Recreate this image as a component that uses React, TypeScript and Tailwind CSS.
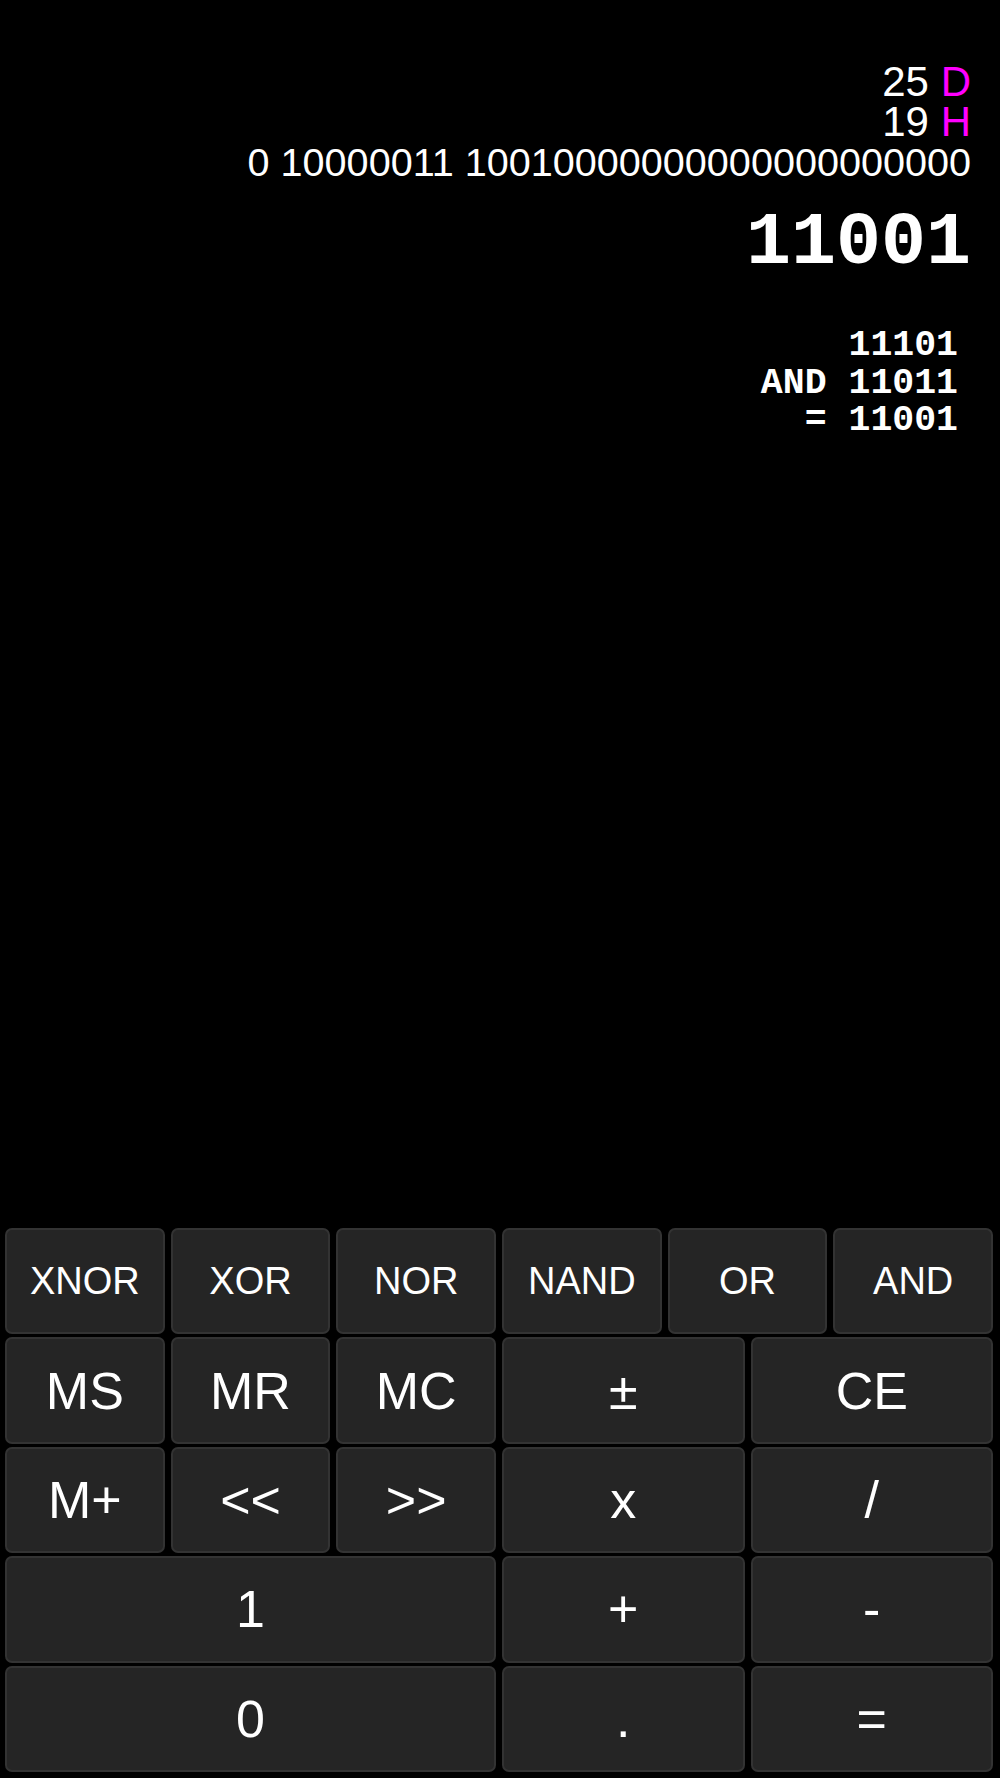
const keys = [
  { label: "XNOR", span: "col-span-2", size: "text-[38px]" },
  { label: "XOR", span: "col-span-2", size: "text-[38px]" },
  { label: "NOR", span: "col-span-2", size: "text-[38px]" },
  { label: "NAND", span: "col-span-2", size: "text-[38px]" },
  { label: "OR", span: "col-span-2", size: "text-[38px]" },
  { label: "AND", span: "col-span-2", size: "text-[38px]" },
  { label: "MS", span: "col-span-2" },
  { label: "MR", span: "col-span-2" },
  { label: "MC", span: "col-span-2" },
  { label: "±", span: "col-span-3" },
  { label: "CE", span: "col-span-3" },
  { label: "M+", span: "col-span-2" },
  { label: "<<", span: "col-span-2" },
  { label: ">>", span: "col-span-2" },
  { label: "x", span: "col-span-3" },
  { label: "/", span: "col-span-3" },
  { label: "1", span: "col-span-6" },
  { label: "+", span: "col-span-3" },
  { label: "-", span: "col-span-3" },
  { label: "0", span: "col-span-6" },
  { label: ".", span: "col-span-3" },
  { label: "=", span: "col-span-3" },
];

const Key = ({ label, span, size = "text-[52px]" }) => {
  return (
    <button
      type="button"
      className={`${span} ${size} flex items-center justify-center rounded-[7px] border-2 border-[#333333] bg-[#252525] text-white leading-none`}
    >
      {label}
    </button>
  );
};

export default function App() {
  return (
    <div
      className="h-[1778px] bg-black flex flex-col"
      style={{ fontFamily: '"Liberation Sans", Arial, sans-serif' }}
    >
      <div className="flex-1 flex flex-col items-end pt-[62px] pr-[29px] text-white">
        <div className="text-[42px] leading-[40px] whitespace-pre">
          {"25 "}
          <span className="text-[#ff00ff]">D</span>
        </div>
        <div className="text-[42px] leading-[40px] whitespace-pre">
          {"19 "}
          <span className="text-[#ff00ff]">H</span>
        </div>
        <div className="text-[39.6px] leading-[40px] whitespace-nowrap">
          0 10000011 10010000000000000000000
        </div>
        <div
          className="mt-[24px] text-[75px] leading-[75px] font-bold"
          style={{ fontFamily: '"Liberation Mono", "Courier New", monospace' }}
        >
          11001
        </div>
        <div
          className="mt-[46px] mr-[13px] text-[36.5px] leading-[37.5px] font-bold text-right whitespace-pre"
          style={{ fontFamily: '"Liberation Mono", "Courier New", monospace' }}
        >
          {"    11101\nAND 11011\n  = 11001"}
        </div>
      </div>

      <div className="grid grid-cols-12 grid-rows-5 gap-x-[6px] gap-y-[3px] h-[544px] pl-[5px] pr-[7px] mb-[6px]">
        {keys.map((key, index) => (
          <Key key={index} label={key.label} span={key.span} size={key.size} />
        ))}
      </div>
    </div>
  );
}
